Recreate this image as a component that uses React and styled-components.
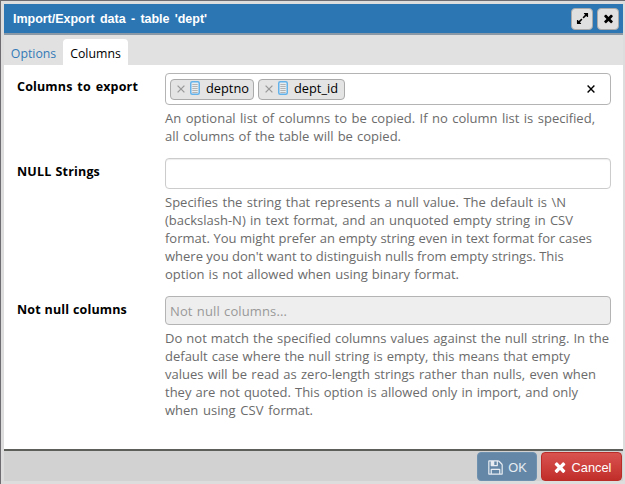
import React from 'react';
import styled, { createGlobalStyle } from 'styled-components';

const Global = createGlobalStyle`
  * { box-sizing: border-box; }
  html, body { margin: 0; padding: 0; overflow: hidden; }
`;

const ui = "'Open Sans', 'Noto Sans', sans-serif";
const helvetica = "'Liberation Sans', Arial, sans-serif";

const Dialog = styled.div`
  width: 625px;
  height: 484px;
  padding: 3px 2px 3px 3px;
  border-top: 1px solid #6e6c70;
  border-left: 1px solid #6e6c70;
  background: #dedddd;
  display: flex;
  flex-direction: column;
  font: 13px ${ui};
  color: #000;
`;

const TitleBar = styled.header`
  height: 31px;
  flex: none;
  display: flex;
  align-items: center;
  padding: 0 4px 0 9px;
  background: #2c76b4;
  border-bottom: 2px solid #8b98a5;
`;

const Title = styled.h1`
  flex: 1;
  margin: 0;
  font: bold 12.5px/28px ${helvetica};
  color: #fff;
  white-space: nowrap;
  span { display: inline-block; width: ${(p) => p.$width}px; text-align-last: justify; letter-spacing: -0.02px; }
`;

const TitleButton = styled.button`
  width: 22px;
  height: 22px;
  margin-left: 4px;
  padding: 0;
  display: flex;
  align-items: center;
  justify-content: center;
  color: #000;
  background: #e0e0e0;
  border: 1px solid #aaa;
  border-radius: 4px;
`;

const Tabs = styled.nav`
  height: 30px;
  flex: none;
  display: flex;
  align-items: flex-end;
  background: #e1e1e1;
`;

const Tab = styled.a`
  width: ${(p) => p.$width}px;
  height: 26px;
  line-height: 29px;
  font-size: 12.3px;
  text-align: center;
  border-radius: 4px 4px 0 0;
  color: ${(p) => (p.$active ? '#000' : '#337ab7')};
  background: ${(p) => (p.$active ? '#fff' : 'transparent')};
`;

const Body = styled.main`
  flex: 1;
  background: #fff;
  padding: 8px 9px 0 13px;
`;

const Field = styled.section`
  display: grid;
  grid-template-columns: 148px 446px;
  height: ${(p) => p.$height}px;
`;

const Label = styled.label`
  padding-top: 5px;
  font-weight: 700;
  font-size: 12.5px;
  line-height: 18px;
  white-space: nowrap;
  span { display: inline-block; width: ${(p) => p.$width}px; text-align-last: justify; letter-spacing: 0.16px; }
`;

const Control = styled.div`
  height: ${(p) => p.$height || 31}px;
  display: flex;
  align-items: center;
  gap: 4px;
  padding: 0 15px 0 4px;
  border: 1px solid ${(p) => p.$border || '#b4b4b4'};
  border-radius: 4px;
  color: #999;
  background: ${(p) => (p.$disabled ? '#eee' : '#fff')};
  box-shadow: ${(p) => (p.$inset ? 'inset 0 1px 1px rgba(0,0,0,.075)' : 'none')};
`;

const Chip = styled.span`
  width: ${(p) => p.$width}px;
  height: 21px;
  display: flex;
  align-items: center;
  padding: 0 5px 1px 6px;
  color: #000;
  background: #e4e4e4;
  border: 1px solid #aaa;
  border-radius: 4px;
  font-size: 12.8px;
  line-height: 17px;
  svg { flex: none; }
  svg:first-child { margin-top: 1px; }
  svg + svg { margin: 0 6px 2px 5px; }
`;

const Clear = styled.span`
  margin-left: auto;
  display: flex;
`;

const Help = styled.div`
  padding-top: 4px;
  color: #6b6b6b;
`;

const Line = styled.span`
  display: block;
  width: ${(p) => p.$width}px;
  height: 18px;
  line-height: 18px;
  white-space: nowrap;
  letter-spacing: ${(p) => p.$track || 0}px;
  text-align-last: justify;
`;

const Footer = styled.footer`
  height: 32px;
  flex: none;
  display: flex;
  align-items: flex-start;
  justify-content: flex-end;
  gap: 4px;
  padding: 1px 1px 0 0;
  border-top: 2px solid #5d5f5b;
  background: #d2d2d2;
`;

const Action = styled.button`
  width: ${(p) => p.$width}px;
  height: 29px;
  flex: none;
  padding: 1px 0 0;
  display: flex;
  align-items: center;
  justify-content: center;
  gap: 4px;
  font: 12.8px ${helvetica};
  color: ${(p) => (p.$danger ? '#fff' : '#e6ecf2')};
  border: 1px solid ${(p) => (p.$danger ? '#b92c28' : '#6f91b0')};
  border-radius: 4px;
  background: ${(p) => (p.$danger ? 'linear-gradient(#d9534f, #c12e2a)' : '#6587a7')};
`;

const paths = {
  times: 'M1490 1322q0 40-28 68l-136 136q-28 28-68 28t-68-28l-294-294-294 294q-28 28-68 28t-68-28l-136-136q-28-28-28-68t28-68l294-294-294-294q-28-28-28-68t28-68l136-136q28-28 68-28t68 28l294 294 294-294q28-28 68-28t68 28l136 136q28 28 28 68t-28 68l-294 294 294 294q28 28 28 68z',
  expand: 'M883 1056q0 13-10 23l-332 332 144 144q19 19 19 45t-19 45-45 19h-448q-26 0-45-19t-19-45v-448q0-26 19-45t45-19 45 19l144 144 332-332q10-10 23-10t23 10l114 114q10 10 10 23zm781-864v448q0 26-19 45t-45 19-45-19l-144-144-332 332q-10 10-23 10t-23-10l-114-114q-10-10-10-23t10-23l332-332-144-144q-19-19-19-45t19-45 45-19h448q26 0 45 19t19 45z',
  save: 'M512 1536h768v-384h-768v384zm896 0h128v-896q0-14-10-38.5t-20-34.5l-281-281q-10-10-34-20t-39-10v416q0 40-28 68t-68 28h-576q-40 0-68-28t-28-68v-416h-128v1280h128v-416q0-40 28-68t68-28h832q40 0 68 28t28 68v416zm-384-928v-320q0-13-9.5-22.5t-22.5-9.5h-192q-13 0-22.5 9.5t-9.5 22.5v320q0 13 9.5 22.5t22.5 9.5h192q13 0 22.5-9.5t9.5-22.5zm640 32v928q0 40-28 68t-68 28h-1344q-40 0-68-28t-28-68v-1344q0-40 28-68t68-28h928q40 0 88 20t76 48l280 280q28 28 48 76t20 88z',
};

const Icon = ({ name, size }) => (
  <svg width={size} height={size} viewBox="0 0 1792 1792" fill="currentColor"><path d={paths[name]} /></svg>
);

const Cross = ({ color, width = 1.3 }) => (
  <svg width="8" height="8" viewBox="0 0 8 8"><path d="M.6.6l6.8 6.8M7.4.6L.6 7.4" stroke={color} strokeWidth={width} /></svg>
);

const ColumnIcon = () => (
  <svg width="10" height="14" viewBox="0 0 10 14">
    <rect x=".75" y=".75" width="8.5" height="12.5" rx="1.5" fill="#e8edf0" stroke="#63b2ea" strokeWidth="1.5" />
    <path d="M2.3 3.5h5.4M2.3 5.5h5.4M2.3 7.5h5.4M2.3 9.5h5.4M2.3 11.5h5.4" stroke="#b3b3b3" strokeWidth="1" />
  </svg>
);

const fields = [
  {
    label: 'Columns to export', labelWidth: 121, height: 85,
    control: { $height: 32 },
    lines: [
      ['An optional list of columns to be copied. If no column list is specified,', 430],
      ['all columns of the table will be copied.', 236],
    ],
  },
  {
    label: 'NULL Strings', labelWidth: 83, height: 138,
    control: { $border: '#ccc', $inset: true },
    lines: [
      ['Specifies the string that represents a null value. The default is \\N', 401],
      ['(backslash-N) in text format, and an unquoted empty string in CSV', 408],
      ['format. You might prefer an empty string even in text format for cases', 427],
      ["where you don't want to distinguish nulls from empty strings. This", 394],
      ['option is not allowed when using binary format.', 294],
    ],
  },
  {
    label: 'Not null columns', labelWidth: 110, height: 126,
    control: { $height: 29, $disabled: true },
    lines: [
      ['Do not match the specified columns values against the null string. In the', 444],
      ['default case where the null string is empty, this means that empty', 405],
      ['values will be read as zero-length strings rather than nulls, even when', 431],
      ['they are not quoted. This option is allowed only in import, and only', 413],
      ['when using CSV format.', 148],
    ],
  },
];

const contents = [
  <>
    <Chip $width={84}><Cross color="#999" /><ColumnIcon />deptno</Chip>
    <Chip $width={87}><Cross color="#999" /><ColumnIcon />dept_id</Chip>
    <Clear><Cross color="#000" width={1.4} /></Clear>
  </>,
  null,
  <Line $width={117} $track={0.12}>Not null columns...</Line>,
];

export default function App() {
  return (
    <Dialog>
      <Global />
      <TitleBar>
        <Title $width={194}><span>Import/Export data - table 'dept'</span></Title>
        <TitleButton><Icon name="expand" size={13} /></TitleButton>
        <TitleButton><Icon name="times" size={13} /></TitleButton>
      </TitleBar>
      <Tabs>
        <Tab $width={59}>Options</Tab>
        <Tab $width={65} $active>Columns</Tab>
      </Tabs>
      <Body>
        {fields.map((f, i) => (
          <Field key={f.label} $height={f.height}>
            <Label $width={f.labelWidth}><span>{f.label}</span></Label>
            <div>
              <Control {...f.control}>{contents[i]}</Control>
              <Help>
                {f.lines.map(([text, width]) => <Line key={text} $width={width}>{text}</Line>)}
              </Help>
            </div>
          </Field>
        ))}
      </Body>
      <Footer>
        <Action $width={60}><Icon name="save" size={17} />OK</Action>
        <Action $width={81} $danger><Icon name="times" size={16} />Cancel</Action>
      </Footer>
    </Dialog>
  );
}
